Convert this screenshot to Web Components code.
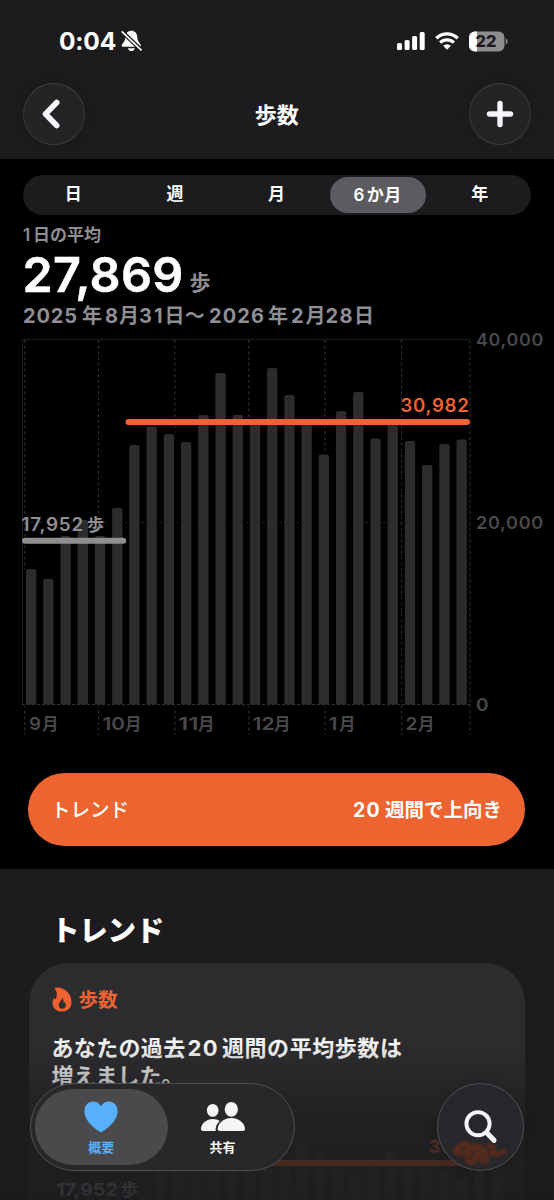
<!DOCTYPE html>
<html lang="ja">
<head>
<meta charset="utf-8">
<title>歩数</title>
<style>
html,body{margin:0;padding:0;background:#1c1c1e}
body{width:554px;height:1200px;overflow:hidden;font-family:Inter,"Noto Sans CJK JP",sans-serif;color:#fff;text-autospace:no-autospace}
</style>
</head>
<body>
<health-app></health-app>
<script>
const define=(name,html,setup)=>customElements.define(name,class extends HTMLElement{
  constructor(){super();this.attachShadow({mode:'open'}).innerHTML=html}
  connectedCallback(){if(setup)setup(this,this.shadowRoot)}
});

/* A line of text tracked out to a given width */
define('fit-text','<style>:host{display:inline-block;white-space:nowrap}span{display:inline-block}</style><span><slot></slot></span>',(el,root)=>{
  const w=+el.getAttribute('w'),s=root.querySelector('span'),n=[...el.textContent].length;
  const nat=s.getBoundingClientRect().width;
  s.style.letterSpacing=((w-nat)/n)+'px';
});

define('status-bar',`<style>
:host{display:flex;flex:none;height:82px;align-items:center;justify-content:space-between;padding:0 46px 0 59px}
div{display:flex;align-items:center}
fit-text{font-size:24.5px;font-weight:700;line-height:30px}
svg{display:block}
.bell{margin-left:5px}.sig{margin-right:10px}.wifi{margin-right:10px}
</style>
<div><fit-text w="57">0:04</fit-text>
<svg class="bell" width="21" height="22" viewBox="0 0 21 22"><path d="M10.3.8C7 .8 4.6 3 4.4 6.6c-.2 3.8-1 5-2.6 6.8-.9 1-1.2 1.8-1.1 2.3.1.8.8 1.1 1.8 1.1h15.700c1 0 1.700-.4 1.700-1.200 0-.6-.4-1.300-1.100-2.200-1.500-1.800-2.400-3-2.600-6.800C16 3 13.600.8 10.300.8zM7 18.200h6.800c-.3 1.700-1.700 2.900-3.400 2.900S7.300 19.900 7 18.200z" fill="#fff"/><path d="M1.200 1.800 20.500 20.300" stroke="#1c1c1e" stroke-width="4.200"/><path d="M1.200 1.800 20 19.800" stroke="#fff" stroke-width="1.700" stroke-linecap="round"/></svg></div>
<div>
<svg class="sig" width="28" height="18" viewBox="0 0 28 18" fill="#fff"><rect y="11" width="5" height="7" rx="1.500"/><rect x="7.600" y="8" width="5" height="10" rx="1.500"/><rect x="15.100" y="4" width="5" height="14" rx="1.500"/><rect x="22.700" width="5" height="18" rx="1.500"/></svg>
<svg class="wifi" width="24" height="18" viewBox="0 0 24 18" fill="none" stroke="#fff" stroke-width="3.300"><path d="M1.300 6.200a15.300 15.300 0 0 1 21.400 0"/><path d="M5.200 10.600a9.700 9.700 0 0 1 13.600 0"/><path d="M8.200 13.800a5.400 5.400 0 0 1 7.600 0L12 17.800z" fill="#fff" stroke="none"/></svg>
<svg width="39" height="21" viewBox="0 0 39 21"><defs><clipPath id="b"><rect x="0" y=".5" width="35.500" height="20" rx="6"/></clipPath></defs><g clip-path="url(#b)"><rect width="39" height="21" fill="#8e8e90"/><rect width="8" height="21" fill="#fff"/></g><path d="M36.800 7.500c1.200.4 1.800 1.500 1.800 3s-.6 2.600-1.800 3z" fill="#8e8e90"/><text x="6.600" y="16" font-size="16" font-weight="800" fill="#1c1c1e" textLength="21" lengthAdjust="spacingAndGlyphs">22</text></svg>
</div>`);

define('glass-button',`<style>
:host{display:flex;align-items:center;justify-content:center;box-sizing:border-box;width:62px;height:62px;border-radius:50%;background:#242426;border:1.500px solid #3e3e40;border-right-color:#39393b;border-left-color:#39393b;box-shadow:0 0 14px rgba(0,0,0,.10)}
</style><slot></slot>`);

define('nav-bar',`<style>
:host{display:flex;flex:none;justify-content:space-between;align-items:center;height:77px;padding:0 23px 0 22.500px;box-sizing:border-box}
svg{display:block}glass-button{margin-top:-13px}
fit-text{font-size:22px;font-weight:700;line-height:30px;margin-top:-12px}
</style>
<glass-button><svg width="18" height="30" viewBox="0 0 18 30" style="margin-left:-6px"><path d="M14.700 3.500 3.500 15l11.200 11.500" fill="none" stroke="#f5f5fa" stroke-width="5.600" stroke-linecap="round" stroke-linejoin="round"/></svg></glass-button>
<fit-text w="44">歩数</fit-text>
<glass-button><svg width="28" height="28" viewBox="0 0 28 28"><path d="M14 3.500v21M3.500 14h21" stroke="#f5f5fa" stroke-width="5.400" stroke-linecap="round"/></svg></glass-button>`);

define('range-picker',`<style>
:host{display:grid;grid-template-columns:repeat(5,1fr);height:40.500px;border-radius:20.500px;background:#1c1c1f;align-items:center;font-size:17px;font-weight:600;line-height:37px;text-align:center}
span{margin-right:1px}
b{font-weight:600;background:#5b5b60;border-radius:18px;height:35.500px;margin:0 3.500px 0 2.500px}
fit-text{margin-left:-1px}
</style><span>日</span><span>週</span><span>月</span><b><fit-text w="48">6<i style="font-style:normal;padding-left:2px"></i>か月</fit-text></b><span>年</span>`);

define('step-summary',`<style>
:host{display:block;color:#8e8e93;font-weight:700}
div{display:flex;white-space:nowrap}
.a{margin-top:7px;height:27px;line-height:27px;font-size:17px;font-weight:600}
.n{height:51px;line-height:51px}
.n .v{font-size:48.500px;color:#fff;font-weight:600;-webkit-text-stroke:.5px #fff;margin-left:-.5px}
.n .u{font-size:21px;font-weight:700;margin-left:6px;line-height:67px}
.d{height:32px;line-height:33px;font-size:20px}
.g{margin-left:4px}
</style>
<div class="a"><fit-text w="10">1</fit-text><fit-text w="68">日の平均</fit-text></div>
<div class="n"><fit-text class="v" w="161">27,869</fit-text><span class="u">歩</span></div>
<div class="d"><fit-text w="55">2025</fit-text><fit-text class="g" w="19">年</fit-text><fit-text class="g" w="14">8</fit-text><fit-text w="20">月</fit-text><fit-text w="25.500">31</fit-text><fit-text w="40.500">日〜</fit-text><fit-text style="margin-left:4px" w="56">2026</fit-text><fit-text style="margin-left:3px" w="19">年</fit-text><fit-text class="g" w="14.500">2</fit-text><fit-text w="20">月</fit-text><fit-text w="28.500">28</fit-text><fit-text w="19">日</fit-text></div>`);

const tops=[569,579,536,520,536,508,445,426.5,434,442,415,373,415,423,368,395,423.5,454.5,411,392,438.5,423.5,441,465,444,439.5];
const bars=(x0,step,w,f,attr)=>tops.map((t,i)=>{const x=x0+i*step,[y,b]=f(t);
  return y>=b?'':`<path d="M${x} ${b}V${y+2}q0-2 2-2h${w-4}q2 0 2 2V${b}z" ${attr}/>`}).join('');
const num=(x,y,w,s,extra='')=>`<text x="${x}" y="${y}" textLength="${w}" lengthAdjust="spacingAndGlyphs" ${extra}>${s}</text>`;
define('step-chart',`<style>:host{display:block}svg{display:block;overflow:visible}text{font-weight:600}.n{letter-spacing:.7px}</style>
<svg width="554" height="410" viewBox="0 332 554 410">
<path d="M22.500 339.500H470M22.500 339.500V704.500" stroke="#1d1d1f" fill="none"/>
<path d="M22 522.500H470" stroke="#242426" stroke-dasharray="4 4"/>
<g stroke="#2c2c2e" stroke-width="1.200" stroke-dasharray="3 2.700">${[24.8,98.5,174.8,248.8,325,401.6,470].map(x=>`<path d="M${x} 340V735"/>`).join('')}</g>
${bars(26,17.22,10.3,t=>[t,704.5],'fill="#2c2c2e" stroke="#000" stroke-width="4" paint-order="stroke"')}
<path d="M22 704.500H470" stroke="#303032" stroke-dasharray="3 2"/>
<path d="M25 540.800H123.200" stroke="#8e8e91" stroke-width="6" stroke-linecap="round"/>
<path d="M128.500 422H467" stroke="#f0622f" stroke-width="6" stroke-linecap="round"/>
<g class="n" font-size="18" fill="#8e8e93">${num(21.5,530.8,62.5,'17,952')}<text x="87" y="530.500" font-size="17">歩</text></g>
${num(400.5,412,69,'30,982','class="n" font-size="18.300" fill="#f0622f"')}
<g font-size="17.600" fill="#48484a"><g class="n">${num(476,346,68,'40,000')}${num(476,529.2,68,'20,000')}</g>${num(476,711,12.5,'0')}
${[['9',29,12,42],['10',102.5,22.5,125],['11',178,20.5,198],['12',252.5,22,274],['1',328.5,9,339],['2',405.5,12,418]].map(([n,x,w,k])=>num(x,729.7,w,n)+`<text x="${k}" y="729.500" font-size="16.500">月</text>`).join('')}</g>
</svg>`);

define('trend-banner',`<style>
:host{display:flex;justify-content:space-between;align-items:center;box-sizing:border-box;height:73px;margin:31px 29px 0 28px;padding:1px 23px 0;border-radius:36.500px;background:#ed6430;line-height:30px;font-size:19.500px}
.l{font-weight:500}.r{display:flex;gap:4px;font-weight:700}
</style><fit-text class="l" w="78">トレンド</fit-text><span class="r"><fit-text w="28">20</fit-text><fit-text w="117">週間で上向き</fit-text></span>`);

define('trend-card',`<style>
:host{display:block;position:relative;box-sizing:border-box;height:270px;margin:0 29px;padding:22px 22.500px 0;border-radius:40px;background:#2d2d2f}
.h{display:flex;align-items:center;height:29px;color:#f0622f;font-size:19.500px;font-weight:700;line-height:29px}
.h svg{margin-right:7px}
.h fit-text{padding-top:1px}
.t{margin-top:19.500px;font-size:22px;font-weight:700;line-height:28.500px}
.t div{display:flex}
.c{display:block;position:absolute;left:0;top:140px}
</style>
<div class="h"><svg width="20" height="25" viewBox="0 0 20 25"><path fill-rule="evenodd" d="M3.200.7C8 .2 12.500 1.800 15.500 5c2.700 2.900 4 6.600 4 10.300 0 5.500-4 9.300-9.400 9.300C4.500 24.600.6 21.200.6 16.200c0-2.800.7-4 1.500-5.200l1.300 1.500C5.400 10 5.700 4.500 2.600 1.500zM10.200 10.500c.1 2.900-3.500 4.500-3.500 7.800 0 2 1.500 3.500 3.500 3.500s3.700-1.500 3.700-3.500c0-1.300-.5-2.500-1.400-3.200-.1.800-.4 1.300-.9 1.500.2-2.200-.2-4.600-1.400-6.100z" fill="#f0622f"/></svg><fit-text w="39">歩数</fit-text></div>
<div class="t"><div><fit-text w="134">あなたの過去</fit-text><fit-text style="margin-left:2px" w="31.500">20</fit-text><fit-text style="margin-left:3px" w="180.500">週間の平均歩数は</fit-text></div><div><fit-text w="132">増えました。</fit-text></div></div>
<svg class="c" width="496" height="130" viewBox="29 1103 496 130">
<path d="M52 1110.500H500" stroke="#424245"/>
${bars(49.2,17.7,10.5,t=>[1163+(t-422)*.37,1240],'fill="#414144"')}
<path d="M160 1163H500" stroke="#f0622f" stroke-width="6" stroke-linecap="round"/>
${num(428,1153,69,'30,982','font-size="18" font-weight="700" fill="#f0622f"')}
<g font-weight="700" font-size="18" fill="#b0b0b5">${num(56,1195.5,62,'17,952')}<text x="121" y="1195.500" font-size="17">歩</text></g>
</svg>`);

define('bottom-fade',`<style>:host{position:absolute;left:0;right:0;bottom:0;height:200px;background:linear-gradient(rgba(28,28,30,0),rgba(28,28,30,.05) 22%,rgba(28,28,30,.36) 41%,rgba(28,28,30,.72) 60%,rgba(28,28,30,.80) 80%,rgba(27,27,29,.88))}</style>`);

define('tab-item',`<style>
:host{display:flex;flex-direction:column;align-items:center;box-sizing:border-box;padding-top:12px;height:76px;width:132.500px;border-radius:38px;font-size:13px;font-weight:700;line-height:18px;color:#f5f5f7}
:host([selected]){background:#4a4a4d;color:#58b0fa}
.x{height:32px;display:flex}.l{margin-top:5px}
</style><div class="x"><slot name="icon"></slot></div><div class="l"><slot></slot></div>`);

define('tab-dock',`<style>
:host{position:absolute;left:29.500px;right:30px;top:1083px;display:flex;justify-content:space-between}
.tabs{display:flex;box-sizing:border-box;width:265px;height:87.500px;border-radius:44px;padding:4.500px 4.500px;background:#28282b;border:1.200px solid #505053}
.tabs tab-item+tab-item{width:121px;margin-left:-5.500px}
glass-button{width:87.500px;height:87.500px;background:#28282c;border:1.200px solid #505053}
svg{display:block}
</style>
<div class="tabs"><tab-item selected><svg slot="icon" width="34" height="32" viewBox="0 0 34 32"><path d="M17 31.200C15.800 31.200.4 21.600.4 10.200.4 4.600 4.100.6 9.100.6c3.500 0 6.300 1.700 7.900 4.600C18.600 2.300 21.400.6 24.900.6c5 0 8.700 4 8.700 9.600C33.600 21.600 18.200 31.200 17 31.200z" fill="#58b0fa"/></svg>概要</tab-item>
<tab-item><svg slot="icon" width="44" height="32" viewBox="0 0 44 32"><g fill="#f5f5f7"><ellipse cx="11.700" cy="9.400" rx="5.800" ry="6.400"/><path d="M2.200 30C.8 30 0 29.300 0 28c0-4.700 4.700-10 11.800-10 2.700 0 5 .7 6.900 1.900-3 2.800-4.500 6-4 10.100z"/><ellipse cx="30.300" cy="8.300" rx="6.600" ry="7.400"/><path d="M19.300 30c-1.800 0-2.600-.8-2.600-2.200 0-4.600 5.300-10.800 13.600-10.800S44 23.200 44 27.800c0 1.400-.9 2.200-2.600 2.200z"/></g></svg>共有</tab-item></div>
<glass-button><svg width="82" height="82" viewBox="439 1086 82 82" >
<defs><filter id="s" x="-20%" y="-20%" width="140%" height="140%"><feGaussianBlur stdDeviation=".9"/></filter></defs>
<g fill="none" stroke="#552a1c" stroke-linecap="round" filter="url(#s)"><path d="M456 1151c2-6 8-8 12-6 2 4-2 8-7 8-3 0-5 0-5-2z" stroke-width="5.500"/><path d="M468 1157c2-7 6-12 8-11 3 3 1 13-3 16-3 1-6-1-5-5zM481 1147c4 2 7 11 5 14-3 2-7-4-8-9 0-3 1-5 3-5z" stroke-width="5.500"/><path d="M490 1146c5 0 5 4 1 7 4 3 9 1 13-2" stroke-width="5"/></g>
<g fill="none" stroke="#f5f5f7" stroke-linecap="round"><path d="m487 1133 7 7.300" stroke-width="5.200"/><circle cx="478" cy="1123.700" r="11.600" stroke-width="3.900"/></g></svg></glass-button>`);

define('health-app',`<style>
:host{display:flex;flex-direction:column;position:relative;width:554px;height:1200px;overflow:hidden;background:#1c1c1e}
main{background:#000;height:710px;box-sizing:border-box;padding-top:15.500px;flex:none}
range-picker,step-summary{margin:0 23px}
h2{margin:0;padding-left:51px;height:94px;box-sizing:border-box;padding-top:42px;line-height:40px;font-size:28.500px;font-weight:800;flex:none}
trend-card{flex:none}
</style>
<status-bar></status-bar><nav-bar></nav-bar>
<main><range-picker></range-picker><step-summary></step-summary><step-chart></step-chart><trend-banner></trend-banner></main>
<h2><fit-text w="113">トレンド</fit-text></h2>
<trend-card></trend-card>
<bottom-fade></bottom-fade>
<tab-dock></tab-dock>`);
</script>
</body>
</html>
